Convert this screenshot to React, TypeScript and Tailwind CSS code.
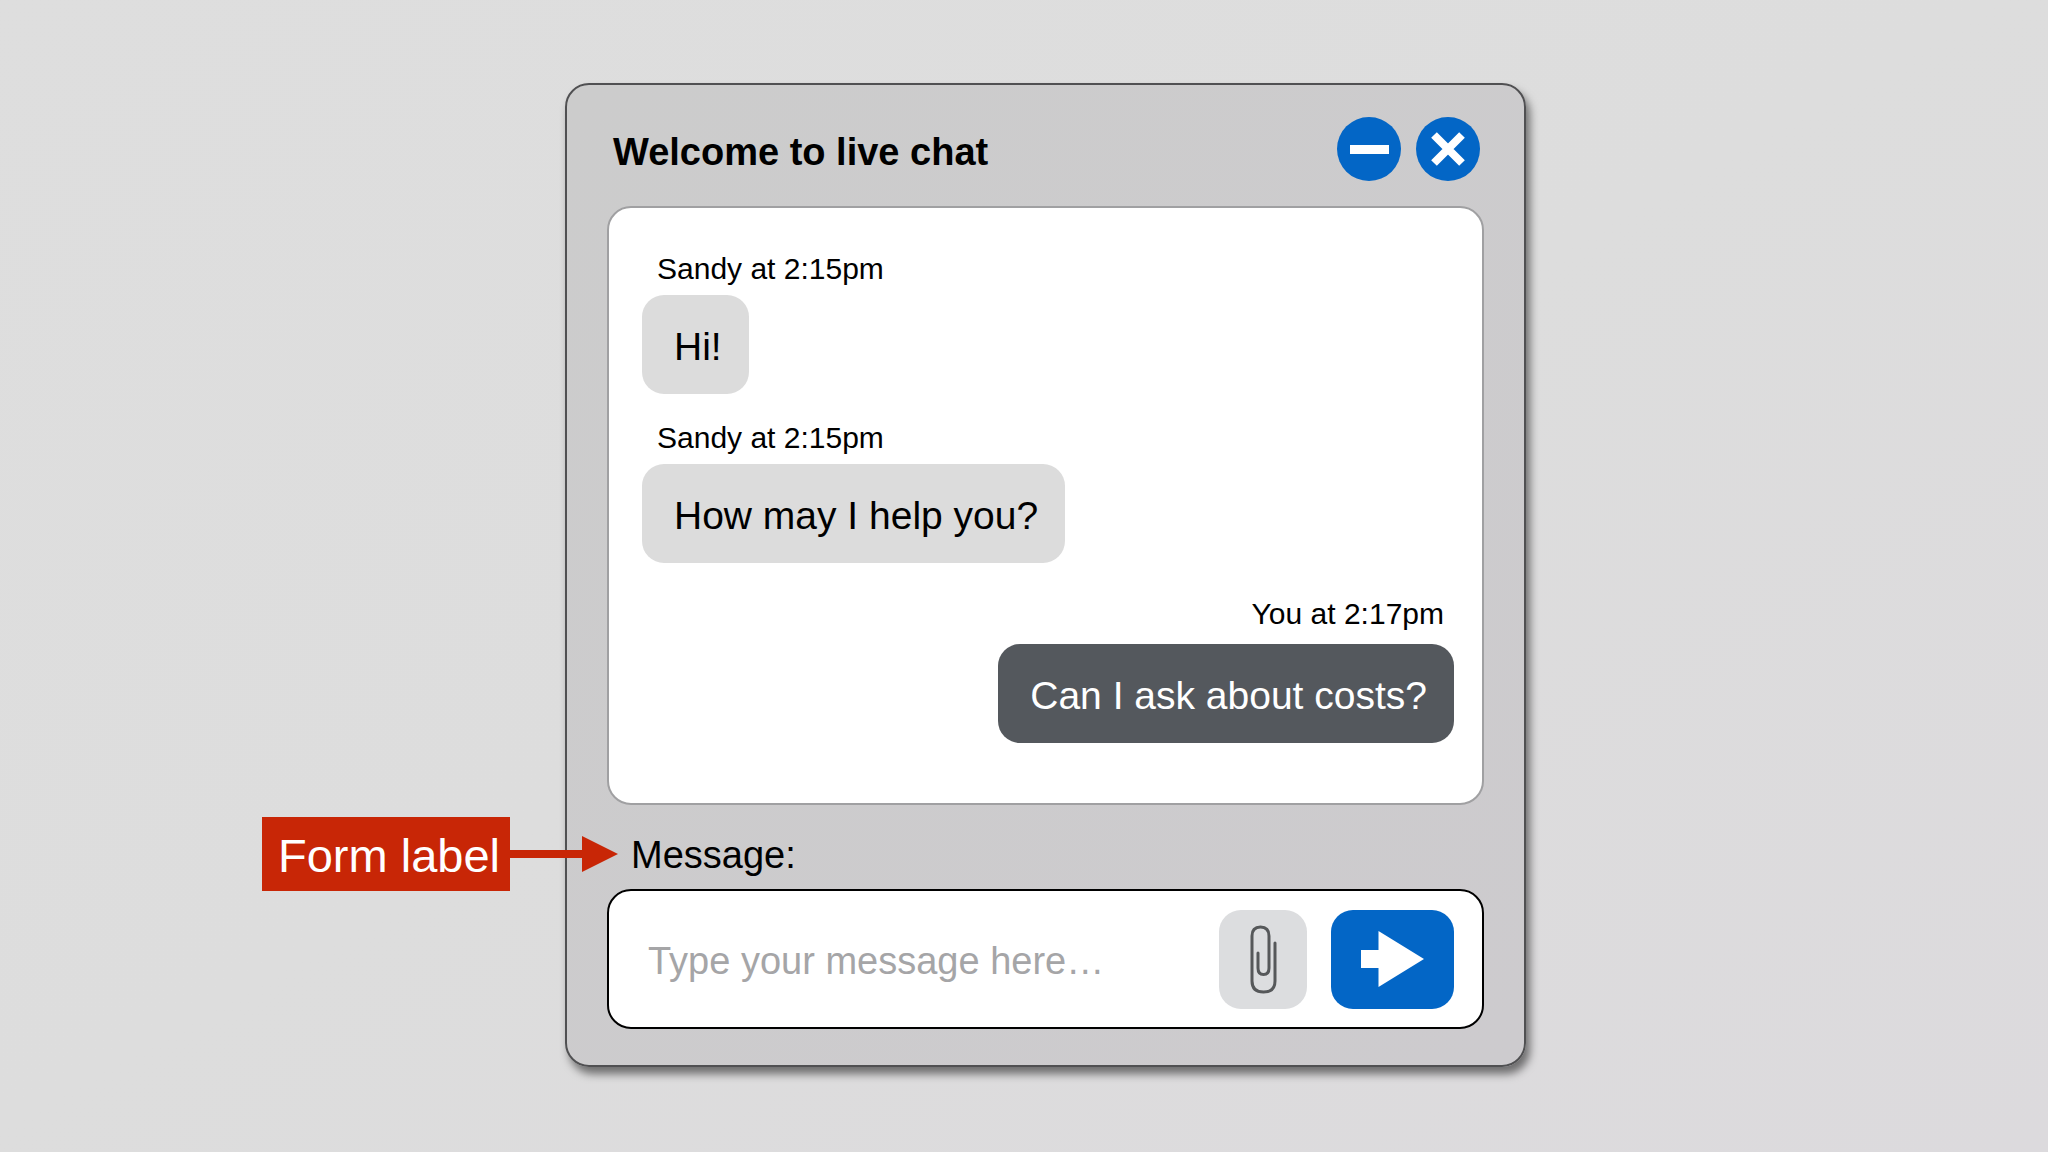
const messages = [
  { id: 1, author: "Sandy", time: "2:15pm", text: "Hi!", mine: false },
  { id: 2, author: "Sandy", time: "2:15pm", text: "How may I help you?", mine: false },
  { id: 3, author: "You", time: "2:17pm", text: "Can I ask about costs?", mine: true },
];

function Message({ author, time, text, mine }: (typeof messages)[number]) {
  return (
    <li className={mine ? "flex flex-col items-end gap-3 pt-[7px]" : "flex flex-col items-start gap-2"}>
      <p className={mine ? "pr-[10px] text-[30px] leading-9" : "pl-[15px] text-[30px] leading-9"}>
        {author} at {time}
      </p>
      <p
        className={
          mine
            ? "rounded-[22px] bg-[#54585d] pt-[30px] pr-[27px] pb-[25px] pl-8 text-[39px] leading-[44px] text-white"
            : "rounded-[22px] bg-[#dcdcdc] pt-[30px] pr-[27px] pb-[25px] pl-8 text-[39px] leading-[44px]"
        }
      >
        {text}
      </p>
    </li>
  );
}

function Callout() {
  return (
    <div className="absolute top-1/2 right-[calc(100%-11px)] flex -translate-y-1/2 items-center">
      <span className="bg-[#c82606] pt-[13px] pr-[10px] pb-[9px] pl-4 text-[47px] leading-[52px] whitespace-nowrap text-white">
        Form label
      </span>
      <svg className="shrink-0" width="108" height="36" viewBox="0 0 108 36" fill="#c82606" aria-hidden="true">
        <path d="M0 14H72V0L108 18L72 36V22H0Z" />
      </svg>
    </div>
  );
}

export default function App() {
  return (
    <main className="flex min-h-screen justify-center bg-linear-to-br from-[#dedede] via-[#dddddd] to-[#dcdadd] pt-[83px] pb-[84px] pl-[43px] font-['Liberation_Sans',Arial,sans-serif] text-black">
      <section className="w-full max-w-[961px] self-start rounded-3xl border-2 border-[#505052] bg-linear-to-br from-[#cccccc] to-[#cdcbce] px-10 pt-8 pb-9 shadow-[4px_7px_9px_rgba(0,0,0,0.5)]">
        <header className="flex items-center justify-between pr-1 pl-[6px]">
          <h1 className="pt-[6px] text-[38px] leading-[44px] font-bold">Welcome to live chat</h1>
          <div className="flex gap-[15px]">
            <button
              type="button"
              aria-label="Minimise chat"
              className="flex size-16 items-center justify-center rounded-full bg-[#0366c6]"
            >
              <svg width="39" height="9" viewBox="0 0 39 9" fill="white">
                <path d="M0 0H39V9H0Z" />
              </svg>
            </button>
            <button
              type="button"
              aria-label="Close chat"
              className="flex size-16 items-center justify-center rounded-full bg-[#0366c6]"
            >
              <svg width="34" height="34" viewBox="0 0 34 34" stroke="white" strokeWidth="8">
                <path d="M3 3L31 31M31 3L3 31" />
              </svg>
            </button>
          </div>
        </header>

        {/* Conversation */}
        <ul className="mt-[25px] flex flex-col gap-[26px] rounded-3xl border-2 border-[#a0a0a2] bg-white pt-[43px] pr-7 pb-[60px] pl-[33px]">
          {messages.map((message) => (
            <Message key={message.id} {...message} />
          ))}
        </ul>

        {/* Composer */}
        <form onSubmit={(e) => e.preventDefault()}>
          <div className="relative mt-[26px] mb-3">
            <label htmlFor="message" className="block pt-[2px] pl-6 text-[38px] leading-[44px]">
              Message:
            </label>
            <Callout />
          </div>
          <div className="flex h-[140px] items-center rounded-3xl border-2 border-black bg-white pr-7 pl-[39px]">
            <input
              id="message"
              type="text"
              placeholder="Type your message here…"
              className="h-12 min-w-0 flex-1 pt-1 text-[38px] leading-[44px] outline-none placeholder:text-[#a5a5a7]"
            />
            <button
              type="button"
              aria-label="Attach a file"
              className="flex h-[99px] w-[88px] items-center justify-center rounded-[22px] bg-[#dcdddf]"
            >
              <svg width="27" height="69" viewBox="0 0 27 69" fill="none" stroke="#56585a" strokeWidth="3" strokeLinecap="round">
                <path d="M25 18V56C25 63.500 20.500 67 13.500 67S2 63.500 2 56V11C2 4.500 5.500 2 10.500 2S19 4.500 19 11V43C19 47.500 17 49.500 13.500 49.500S8 47.500 8 43V28" />
              </svg>
            </button>
            <button
              type="submit"
              aria-label="Send message"
              className="ml-6 flex h-[99px] w-[123px] items-center justify-center rounded-[22px] bg-[#0366c6]"
            >
              <svg width="63" height="56" viewBox="0 0 63 56" fill="white">
                <path d="M0 19H17.500V0L63 28L17.500 56V37H0Z" />
              </svg>
            </button>
          </div>
        </form>
      </section>
    </main>
  );
}
